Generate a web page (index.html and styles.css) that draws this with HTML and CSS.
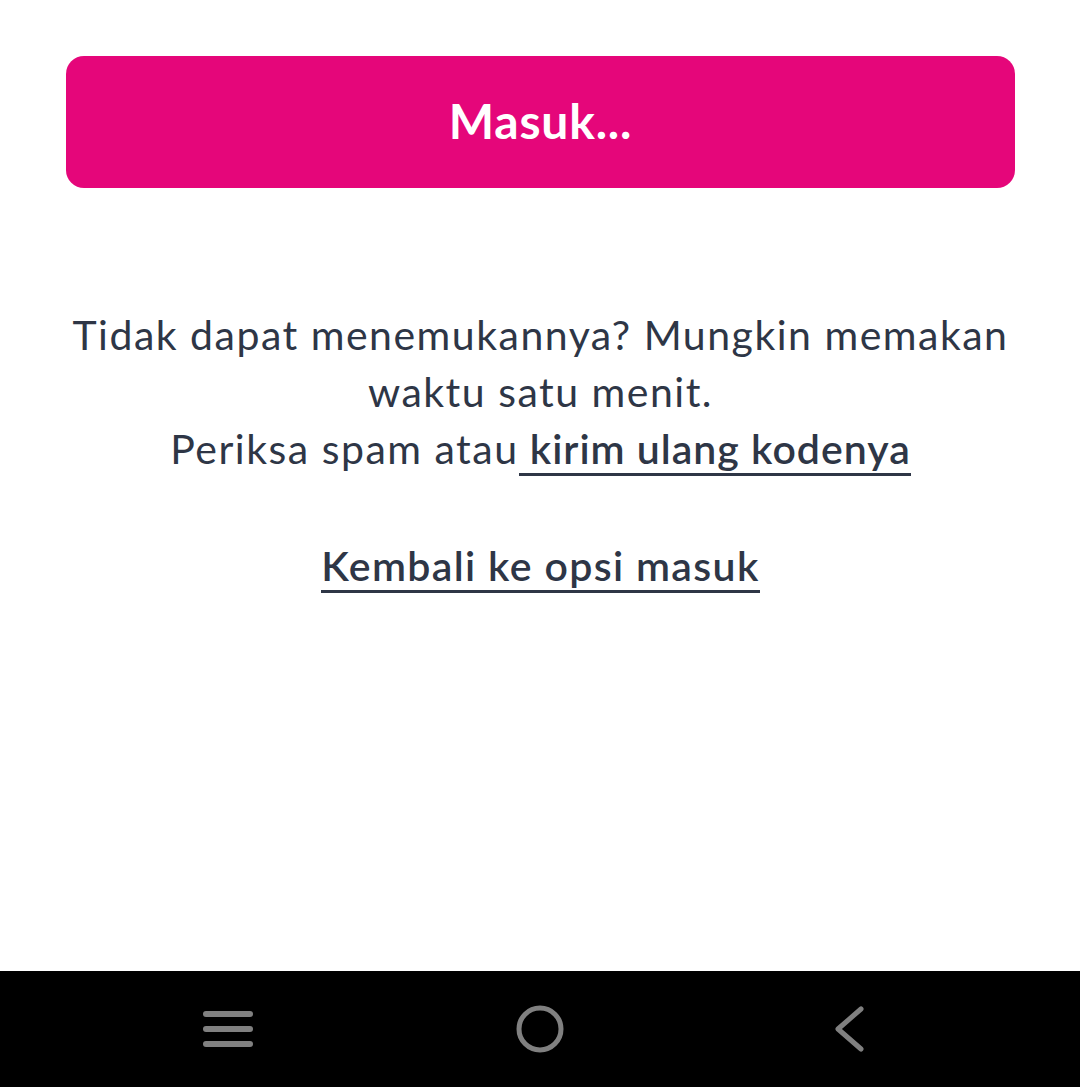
FILE: index.html
```html
<!DOCTYPE html>
<html lang="id">
<head>
<meta charset="utf-8">
<title>Masuk</title>
<link rel="stylesheet" href="styles.css">
</head>
<body>
<div class="screen">
  <main class="content">
    <button class="primary-btn" type="button">Masuk...</button>
    <p class="hint">Tidak dapat menemukannya? Mungkin memakan waktu satu menit.<br>Periksa spam atau<a class="link" href="#"> kirim ulang kodenya</a></p>
    <p class="back"><a class="link link-back" href="#">Kembali ke opsi masuk</a></p>
  </main>
  <nav class="navbar">
    <svg class="nav-icon" width="52" height="40" viewBox="0 0 52 40"><g stroke="#808080" stroke-width="6" stroke-linecap="round"><line x1="4" y1="5" x2="48" y2="5"/><line x1="4" y1="20" x2="48" y2="20"/><line x1="4" y1="35" x2="48" y2="35"/></g></svg>
    <svg class="nav-icon" width="52" height="52" viewBox="0 0 52 52"><circle cx="26" cy="26" r="21" fill="none" stroke="#808080" stroke-width="5"/></svg>
    <svg class="nav-icon" width="52" height="52" viewBox="0 0 52 52"><polyline points="35,6 12,26 35,46" fill="none" stroke="#808080" stroke-width="5" stroke-linecap="round" stroke-linejoin="round"/></svg>
  </nav>
</div>
</body>
</html>
```
FILE: styles.css
```css
* { box-sizing: border-box; }
html, body { margin: 0; padding: 0; background: #fff; }
body { font-family: Lato, "Open Sans", sans-serif; color: #2e3646; }
.screen { display: flex; flex-direction: column; height: 1087px; }
.content { flex: 1; display: flex; flex-direction: column; align-items: center; padding: 56px 65px 0 66px; }
.primary-btn {
  width: 100%; height: 132px; border: 0; border-radius: 18px;
  padding: 0 0 4px;
  background: #e5067a; color: #fff;
  font-family: inherit; font-size: 48px; font-weight: 700; letter-spacing: 0.8px;
}
.hint { margin: 118px 0 0; text-align: center; font-size: 41px; line-height: 57px; letter-spacing: 1.5px; }
.back { margin: 60px 0 0; text-align: center; font-size: 41px; line-height: 57px; }
.link { color: #2e3646; font-weight: 600; letter-spacing: 1px; text-decoration: none; border-bottom: 3px solid #2e3646; padding-bottom: 0; }
.link-back { letter-spacing: 1.35px; }
.navbar { height: 116px; background: #000; display: flex; align-items: center; justify-content: space-between; padding: 0 202px 0 202px; }
.nav-icon { display: block; }
```
